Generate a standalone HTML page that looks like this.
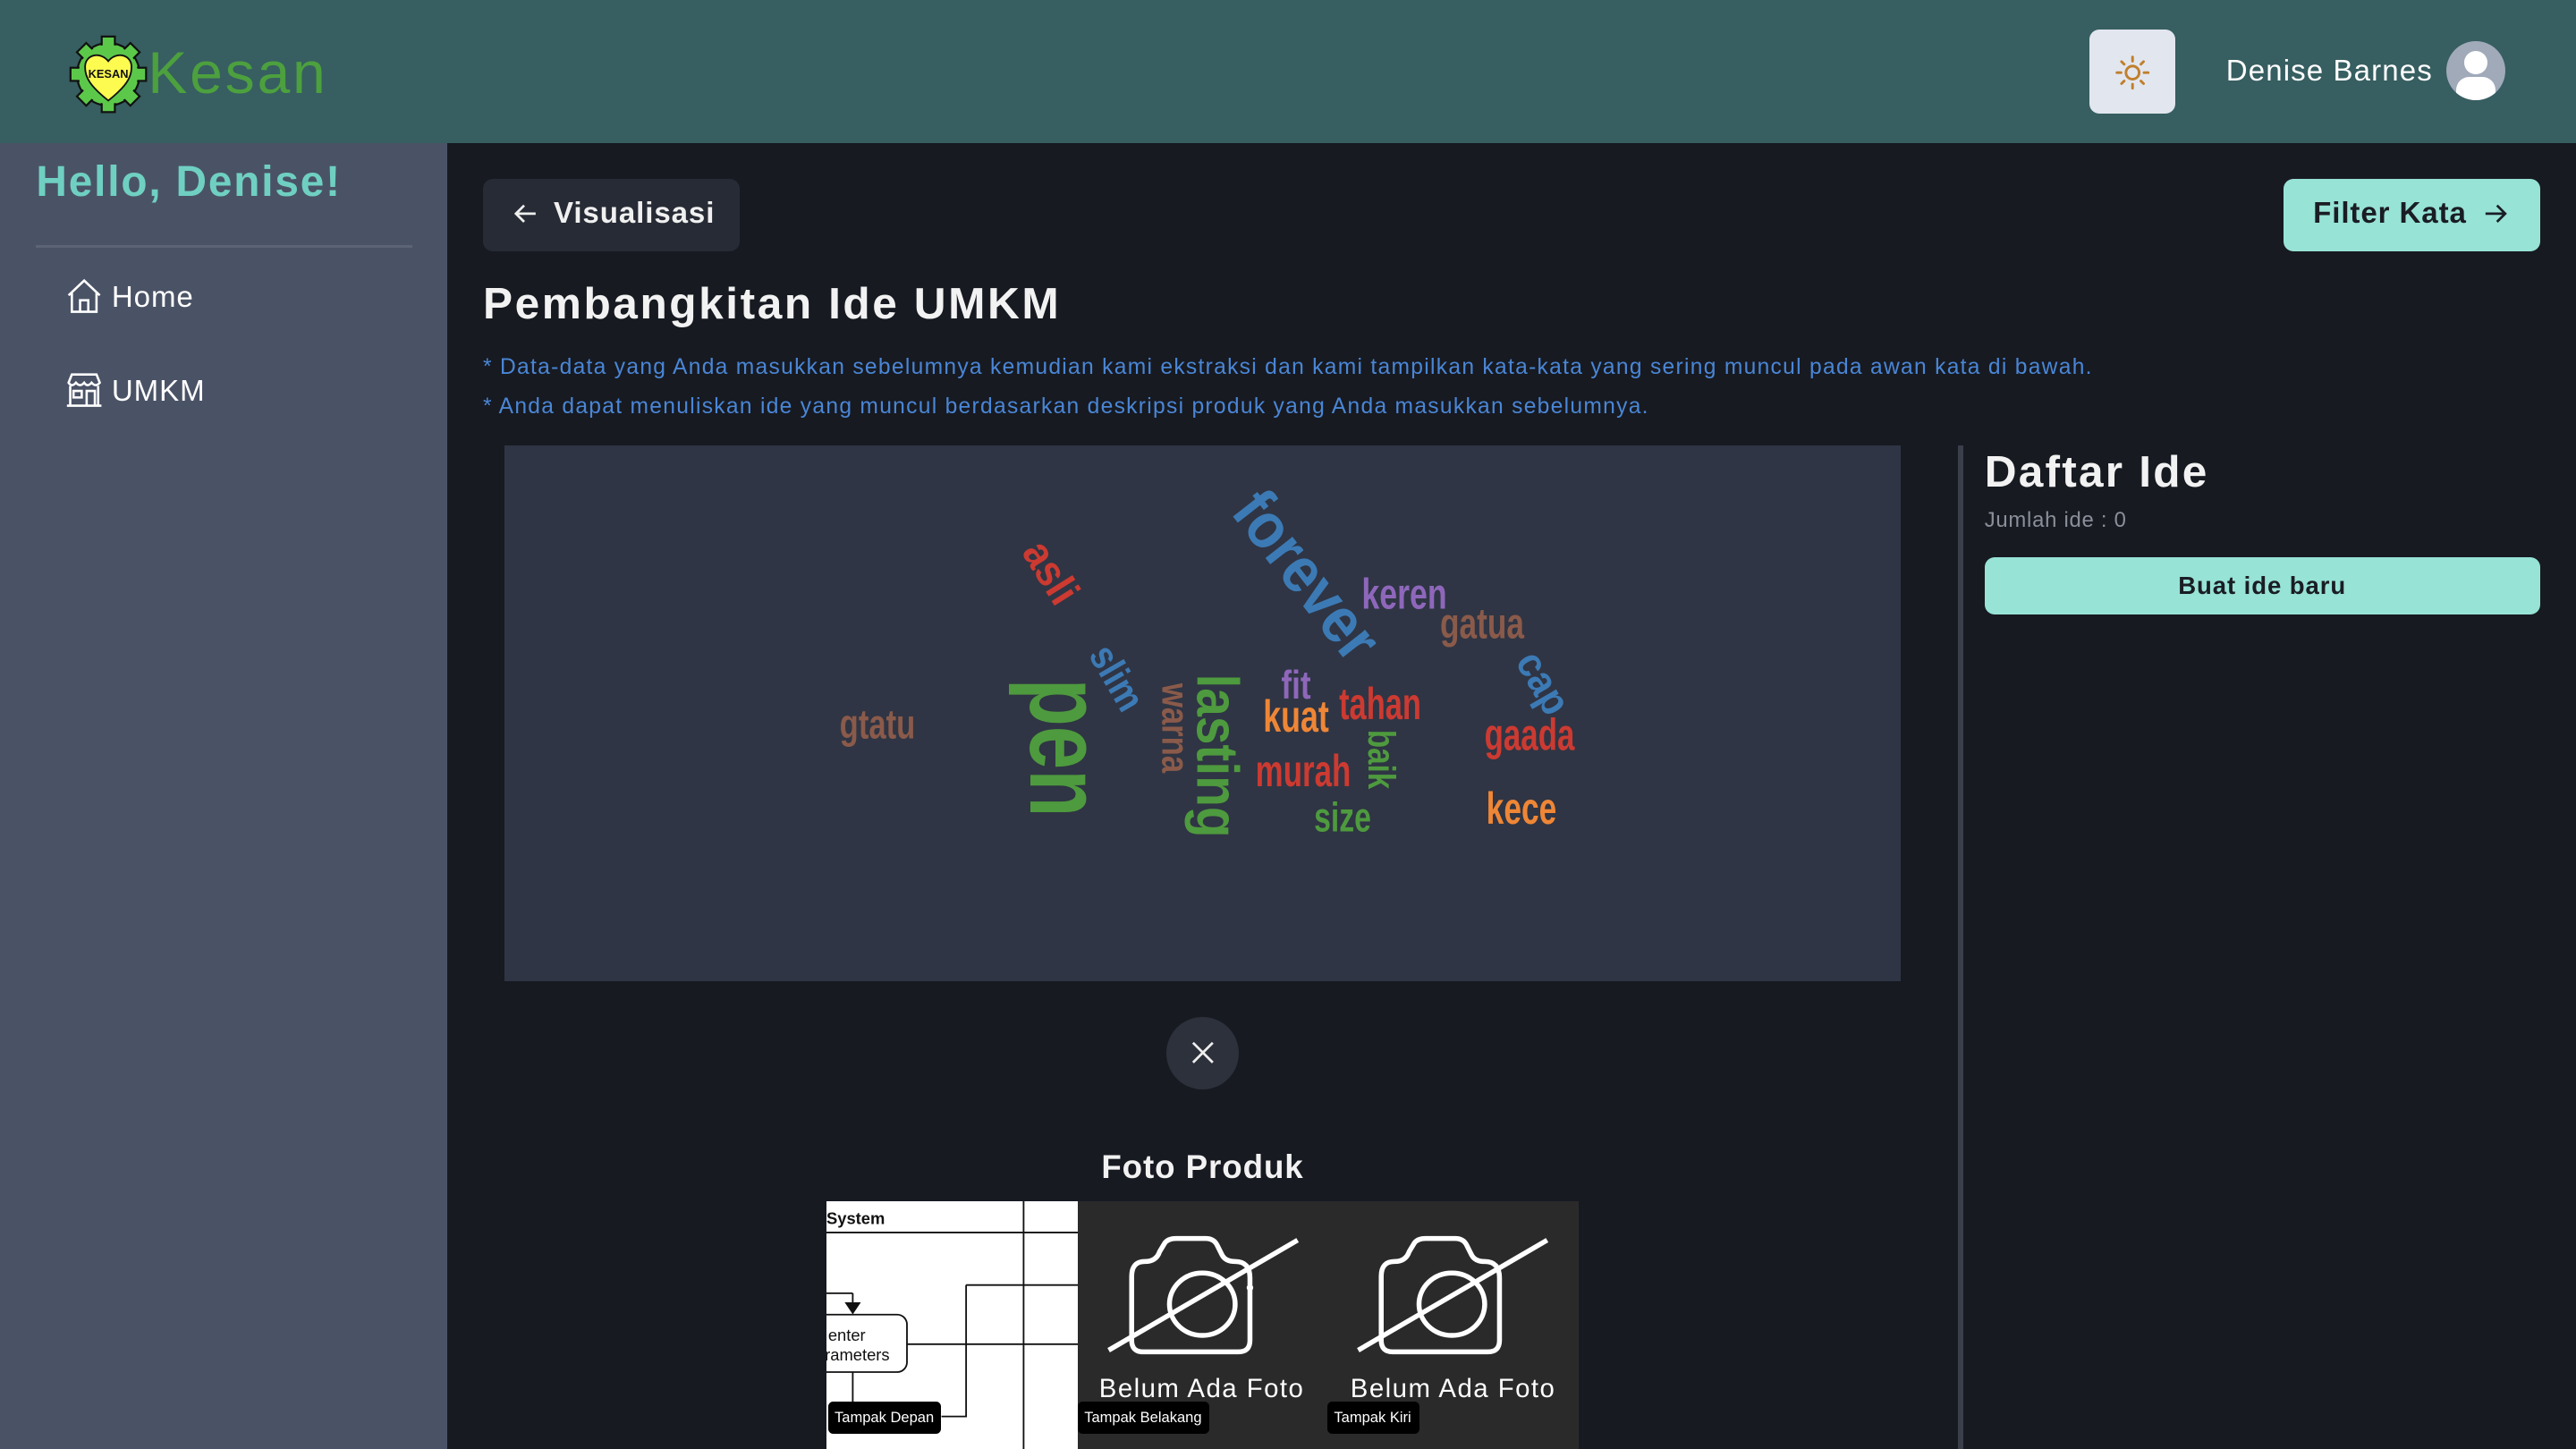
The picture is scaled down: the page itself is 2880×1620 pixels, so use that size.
<!DOCTYPE html>
<html><head><meta charset="utf-8">
<style>
*{margin:0;padding:0;box-sizing:border-box}
html,body{width:2880px;height:1620px;overflow:hidden;background:#171a21}
#w{position:relative;width:1568px;height:882px;zoom:1.836735;font-family:"Liberation Sans",sans-serif;background:#171a21;overflow:hidden}
.a{position:absolute}
.hd{left:0;top:0;width:1568px;height:87px;background:#375e61}
.sb{left:0;top:87px;width:272px;height:795px;background:#4a5366}
.wc{left:307px;top:271px;width:850px;height:326px;background:#2f3544}
.w{position:absolute;font-family:"Liberation Sans",sans-serif;font-weight:bold;white-space:nowrap;line-height:1;width:0;height:0}
.w span{position:absolute;left:0;top:0;display:block;transform-origin:0 0}
</style></head><body><div id="w">
<div class="a hd"></div>
<svg class="a" style="left:42px;top:21px" width="48" height="48" viewBox="0 0 48 48">
<g fill="#5cc84a" stroke="#111" stroke-width="1.2">
<circle cx="24" cy="24" r="19"/>
<rect x="20" y="1" width="8" height="7"/><rect x="20" y="40" width="8" height="7"/>
<rect x="1" y="20" width="7" height="8"/><rect x="40" y="20" width="7" height="8"/>
<rect x="20" y="1" width="8" height="7" transform="rotate(45 24 24)"/><rect x="20" y="40" width="8" height="7" transform="rotate(45 24 24)"/>
<rect x="1" y="20" width="7" height="8" transform="rotate(45 24 24)"/><rect x="40" y="20" width="7" height="8" transform="rotate(45 24 24)"/>
</g>
<circle cx="24" cy="24" r="18" fill="#5cc84a"/>
<path d="M24 40 C14 32 9 26 10 18 C11 12 19 10 24 16 C29 10 37 12 38 18 C39 26 34 32 24 40Z" fill="#fdfb4f" stroke="#111" stroke-width="1"/>
<text x="24" y="26" font-size="7" font-weight="bold" text-anchor="middle" fill="#111" font-family="Liberation Sans,sans-serif">KESAN</text>
</svg>
<div class="a" style="left:90px;top:24px;font-size:36px;color:#4ca03e;letter-spacing:1.5px">Kesan</div>
<div class="a" style="left:1272px;top:18px;width:52px;height:51px;background:#e2e6ee;border-radius:6px"></div>
<svg class="a" style="left:1287px;top:33px" width="22" height="22" viewBox="0 0 22 22" stroke="#c07f2c" stroke-width="1.6" fill="none" stroke-linecap="round">
<circle cx="11" cy="11" r="4"/><path d="M11 1.5v2.5M11 18v2.5M1.5 11h2.5M18 11h2.5M4.3 4.3l1.6 1.6M16.1 16.1l1.6 1.6M4.3 17.7l1.6-1.6M16.1 5.9l1.6-1.6"/></svg>
<div class="a" style="left:1355px;top:33px;font-size:18px;color:#fff;letter-spacing:0.6px">Denise Barnes</div>
<div class="a" style="left:1489px;top:25px;width:36px;height:36px;border-radius:50%;background:#a0aab9;overflow:hidden">
<div class="a" style="left:11px;top:6px;width:14px;height:14px;border-radius:50%;background:#fff"></div>
<div class="a" style="left:6px;top:22px;width:24px;height:14px;border-radius:8px 8px 4px 4px;background:#fff"></div></div>

<div class="a sb"></div>
<div class="a" style="left:22px;top:96px;font-size:26px;font-weight:bold;color:#6fd0c2;letter-spacing:1px">Hello, Denise!</div>
<div class="a" style="left:22px;top:149px;width:229px;height:2px;background:#5b6375"></div>
<svg class="a" style="left:40px;top:169px" width="23" height="23" viewBox="0 0 23 23" fill="none" stroke="#fff" stroke-width="1.4"><path d="M2 11 L11.5 2 L21 11 M4 9 V21 H19 V9 M9 21 V14 H14 V21"/></svg>
<div class="a" style="left:68px;top:171px;font-size:18px;color:#fff;letter-spacing:0.5px">Home</div>
<svg class="a" style="left:40px;top:226px" width="23" height="23" viewBox="0 0 23 23" fill="none" stroke="#fff" stroke-width="1.4"><path d="M2 7 L4 2 H19 L21 7 Q18.5 10 16 7 Q13.5 10 11.5 7 Q9 10 6.5 7 Q4 10 2 7Z M3 9 V21 H20 V9 M1 21 H22 M5 12 H10 V16 H5Z M13 21 V12 H18 V21"/></svg>
<div class="a" style="left:68px;top:228px;font-size:18px;color:#fff;letter-spacing:0.5px">UMKM</div>

<div class="a" style="left:294px;top:109px;width:156px;height:44px;background:#272b35;border-radius:6px"></div>
<svg class="a" style="left:313px;top:123px" width="14" height="14" viewBox="0 0 14 14" fill="none" stroke="#eee" stroke-width="1.5"><path d="M13 7H1M6 2L1 7L6 12"/></svg>
<div class="a" style="left:337px;top:120px;font-size:18px;font-weight:bold;color:#f0f0f0;letter-spacing:0.5px">Visualisasi</div>
<div class="a" style="left:1390px;top:109px;width:156px;height:44px;background:#97e3d6;border-radius:6px"></div>
<div class="a" style="left:1408px;top:120px;font-size:18px;font-weight:bold;color:#1a1d24;letter-spacing:0.5px">Filter Kata</div>
<svg class="a" style="left:1512px;top:123px" width="14" height="14" viewBox="0 0 14 14" fill="none" stroke="#1a1d24" stroke-width="1.5"><path d="M1 7H13M8 2L13 7L8 12"/></svg>

<div class="a" style="left:294px;top:169px;font-size:27px;font-weight:bold;color:#f2f2f2;letter-spacing:1.4px">Pembangkitan Ide UMKM</div>
<div class="a" style="left:294px;top:216px;font-size:13.4px;color:#4a86d6;letter-spacing:0.7px">* Data-data yang Anda masukkan sebelumnya kemudian kami ekstraksi dan kami tampilkan kata-kata yang sering muncul pada awan kata di bawah.</div>
<div class="a" style="left:294px;top:240px;font-size:13.4px;color:#4a86d6;letter-spacing:0.7px">* Anda dapat menuliskan ide yang muncul berdasarkan deskripsi produk yang Anda masukkan sebelumnya.</div>

<div class="a wc"></div>
<div class="w" style="left:637px;top:350px;font-size:24px;color:#cc3a31"><span style="transform:rotate(58deg) scale(1,1.1) translate(-50%,-60%)">asli</span></div>
<div class="w" style="left:792px;top:353px;font-size:36px;color:#3c7ab5"><span style="transform:rotate(52deg) scale(.97,1.1) translate(-50%,-60%)">forever</span></div>
<div class="w" style="left:855px;top:365px;font-size:24px;color:#8e67bb"><span style="transform:scale(.81,1.1) translate(-50%,-60%)">keren</span></div>
<div class="w" style="left:902px;top:383px;font-size:24px;color:#8a5a4a"><span style="transform:scale(.8,1.1) translate(-50%,-60%)">gatua</span></div>
<div class="w" style="left:937px;top:417px;font-size:23px;color:#3c7ab5"><span style="transform:rotate(60deg) scale(1,1.1) translate(-50%,-60%)">cap</span></div>
<div class="w" style="left:678px;top:414px;font-size:22px;color:#3c7ab5"><span style="transform:rotate(60deg) scale(.95,1.1) translate(-50%,-60%)">slim</span></div>
<div class="w" style="left:641px;top:455px;font-size:60px;color:#4e9a3e"><span style="transform:rotate(90deg) scale(.79,1.05) translate(-50%,-62%)">pen</span></div>
<div class="w" style="left:712px;top:443px;font-size:21px;color:#8a5a4a"><span style="transform:rotate(90deg) scale(.9,1.1) translate(-50%,-60%)">warna</span></div>
<div class="w" style="left:739px;top:460px;font-size:34px;color:#4e9a3e"><span style="transform:rotate(90deg) scale(.91,1.05) translate(-50%,-55%)">lasting</span></div>
<div class="w" style="left:789px;top:418px;font-size:22px;color:#8e67bb"><span style="transform:scale(.87,1.1) translate(-50%,-55%)">fit</span></div>
<div class="w" style="left:789px;top:438px;font-size:25px;color:#ef8636"><span style="transform:scale(.78,1.1) translate(-50%,-55%)">kuat</span></div>
<div class="w" style="left:840px;top:430px;font-size:25px;color:#cc3a31"><span style="transform:scale(.75,1.1) translate(-50%,-55%)">tahan</span></div>
<div class="w" style="left:839px;top:462px;font-size:21px;color:#4e9a3e"><span style="transform:rotate(90deg) scale(.86,1.1) translate(-50%,-55%)">baik</span></div>
<div class="w" style="left:793px;top:471px;font-size:25px;color:#cc3a31"><span style="transform:scale(.76,1.1) translate(-50%,-55%)">murah</span></div>
<div class="w" style="left:817px;top:501px;font-size:23px;color:#4e9a3e"><span style="transform:scale(.8,1.1) translate(-50%,-62%)">size</span></div>
<div class="w" style="left:534px;top:444px;font-size:23px;color:#8a5a4a"><span style="transform:scale(.82,1.1) translate(-50%,-62%)">gtatu</span></div>
<div class="w" style="left:931px;top:451px;font-size:25px;color:#cc3a31"><span style="transform:scale(.76,1.1) translate(-50%,-62%)">gaada</span></div>
<div class="w" style="left:926px;top:494px;font-size:25px;color:#ef8636"><span style="transform:scale(.77,1.1) translate(-50%,-55%)">kece</span></div>

<div class="a" style="left:710px;top:619px;width:44px;height:44px;border-radius:50%;background:#2d313b"></div>
<svg class="a" style="left:725px;top:634px" width="14" height="14" viewBox="0 0 14 14" stroke="#eee" stroke-width="1.5"><path d="M1 1L13 13M13 1L1 13"/></svg>
<div class="a" style="left:632px;top:699px;width:200px;text-align:center;font-size:20px;font-weight:bold;color:#f2f2f2;letter-spacing:0.5px">Foto Produk</div>

<div class="a" style="left:503px;top:731px;width:153px;height:151px;background:#fff;overflow:hidden">
<svg width="153" height="151" viewBox="0 0 153 151" fill="none" stroke="#111" stroke-width="1">
<path d="M0 19H153M120 0V151M16 56V66M85 51H153M85 51V131H70M0 56H16M0 87H153M16 98V131"/>
<path d="M12 62L16 68L20 62Z" fill="#111"/>
<rect x="-6" y="69" width="55" height="35" rx="6" fill="#fff"/>
<text x="0" y="14" font-size="10" font-weight="bold" fill="#111" stroke="none" font-family="Liberation Sans,sans-serif">System</text>
<text x="1" y="85" font-size="10" fill="#111" stroke="none" font-family="Liberation Sans,sans-serif">enter</text>
<text x="-1" y="97" font-size="10" fill="#111" stroke="none" font-family="Liberation Sans,sans-serif">rameters</text>
</svg></div>
<div class="a" style="left:656px;top:731px;width:305px;height:151px;background:#2a2a2a"></div>
<svg class="a" style="left:672px;top:752px" width="125" height="75" viewBox="0 0 125 75" fill="none" stroke="#fff" stroke-width="3">
<path d="M25 16 Q32 16 34 10 L37 5 Q39 2 44 2 H62 Q67 2 69 6 L72 12 Q74 16 80 16 Q89 16 89 26 V64 Q89 71 82 71 H24 Q17 71 17 64 V25 Q17 16 25 16Z"/>
<ellipse cx="60" cy="42" rx="20" ry="19"/><path d="M3 70 L118 3"/><circle cx="89" cy="32" r="0.5"/></svg>
<svg class="a" style="left:824px;top:752px" width="125" height="75" viewBox="0 0 125 75" fill="none" stroke="#fff" stroke-width="3">
<path d="M25 16 Q32 16 34 10 L37 5 Q39 2 44 2 H62 Q67 2 69 6 L72 12 Q74 16 80 16 Q89 16 89 26 V64 Q89 71 82 71 H24 Q17 71 17 64 V25 Q17 16 25 16Z"/>
<ellipse cx="60" cy="42" rx="20" ry="19"/><path d="M3 70 L118 3"/></svg>
<div class="a" style="left:669px;top:836px;font-size:16px;color:#fff;letter-spacing:0.8px">Belum Ada Foto</div>
<div class="a" style="left:822px;top:836px;font-size:16px;color:#fff;letter-spacing:0.8px">Belum Ada Foto</div>
<div class="a" style="left:504px;top:853px;width:69px;height:20px;background:#000;border-radius:3px;color:#fff;font-size:9px;line-height:20px;padding-left:4px">Tampak Depan</div>
<div class="a" style="left:656px;top:853px;width:80px;height:20px;background:#000;border-radius:3px;color:#fff;font-size:9px;line-height:20px;padding-left:4px">Tampak Belakang</div>
<div class="a" style="left:808px;top:853px;width:56px;height:20px;background:#000;border-radius:3px;color:#fff;font-size:9px;line-height:20px;padding-left:4px">Tampak Kiri</div>

<div class="a" style="left:1192px;top:271px;width:3px;height:611px;background:#3a3f4a"></div>
<div class="a" style="left:1208px;top:271px;font-size:27px;font-weight:bold;color:#f2f2f2;letter-spacing:1.2px">Daftar Ide</div>
<div class="a" style="left:1208px;top:309px;font-size:13px;color:#8a8f99;letter-spacing:0.4px">Jumlah ide : 0</div>
<div class="a" style="left:1208px;top:339px;width:338px;height:35px;background:#97e3d6;border-radius:6px;text-align:center;line-height:35px;font-size:15px;font-weight:bold;color:#1a1d24;letter-spacing:0.5px">Buat ide baru</div>
</div></body></html>
